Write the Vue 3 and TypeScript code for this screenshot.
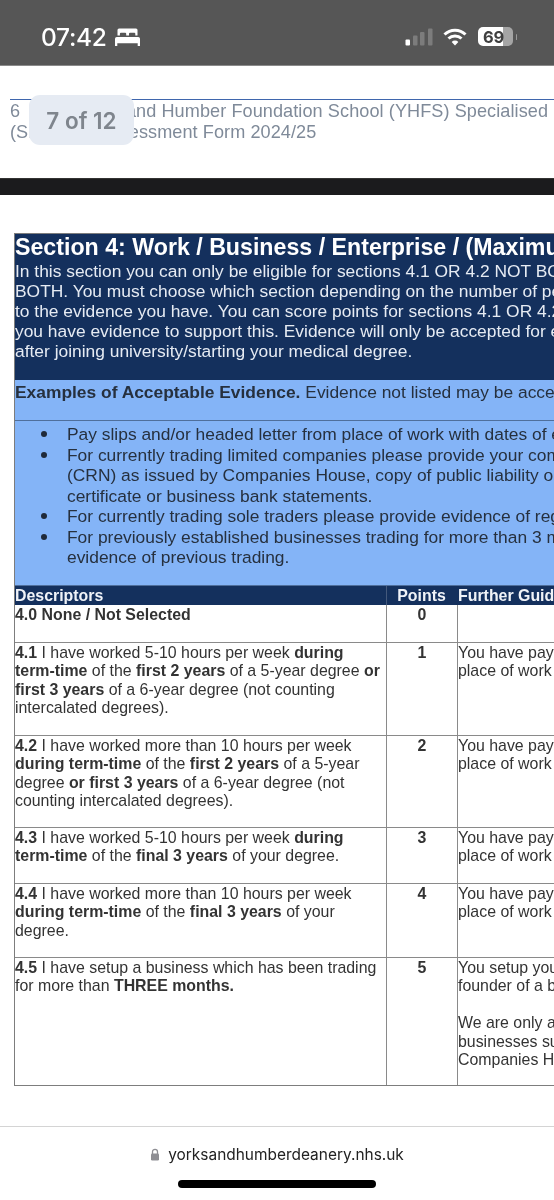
<script setup lang="ts">
interface Seg { t: string; b?: boolean }
interface Row { h: number; pts: string; lines: Seg[][]; guide: string[] }

const pay = ['You have pay slips', 'place of work']
const rows: Row[] = [
  { h: 38, pts: '0', lines: [[{ t: '4.0 None / Not Selected', b: true }]], guide: [] },
  { h: 93, pts: '1', guide: pay, lines: [
    [{ t: '4.1', b: true }, { t: ' I have worked 5-10 hours per week ' }, { t: 'during', b: true }],
    [{ t: 'term-time', b: true }, { t: ' of the ' }, { t: 'first 2 years', b: true }, { t: ' of a 5-year degree ' }, { t: 'or', b: true }],
    [{ t: 'first 3 years', b: true }, { t: ' of a 6-year degree (not counting' }],
    [{ t: 'intercalated degrees).' }]
  ] },
  { h: 92, pts: '2', guide: pay, lines: [
    [{ t: '4.2', b: true }, { t: ' I have worked more than 10 hours per week' }],
    [{ t: 'during term-time', b: true }, { t: ' of the ' }, { t: 'first 2 years', b: true }, { t: ' of a 5-year' }],
    [{ t: 'degree ' }, { t: 'or first 3 years', b: true }, { t: ' of a 6-year degree (not' }],
    [{ t: 'counting intercalated degrees).' }]
  ] },
  { h: 56, pts: '3', guide: pay, lines: [
    [{ t: '4.3', b: true }, { t: ' I have worked 5-10 hours per week ' }, { t: 'during', b: true }],
    [{ t: 'term-time', b: true }, { t: ' of the ' }, { t: 'final 3 years', b: true }, { t: ' of your degree.' }]
  ] },
  { h: 74, pts: '4', guide: pay, lines: [
    [{ t: '4.4', b: true }, { t: ' I have worked more than 10 hours per week' }],
    [{ t: 'during term-time', b: true }, { t: ' of the ' }, { t: 'final 3 years', b: true }, { t: ' of your' }],
    [{ t: 'degree.' }]
  ] },
  { h: 127, pts: '5', guide: ['You setup your', 'founder of a business', '\u00a0', 'We are only able', 'businesses such', 'Companies House'], lines: [
    [{ t: '4.5', b: true }, { t: ' I have setup a business which has been trading' }],
    [{ t: 'for more than ' }, { t: 'THREE months.', b: true }]
  ] }
]
const intro = [
  'In this section you can only be eligible for sections 4.1 OR 4.2 NOT BOTH',
  'BOTH. You must choose which section depending on the number of periods',
  'to the evidence you have. You can score points for sections 4.1 OR 4.2 if',
  'you have evidence to support this. Evidence will only be accepted for evidence',
  'after joining university/starting your medical degree.'
]
const bullets = [
  ['Pay slips and/or headed letter from place of work with dates of employment'],
  ['For currently trading limited companies please provide your company number', '(CRN) as issued by Companies House, copy of public liability or', 'certificate or business bank statements.'],
  ['For currently trading sole traders please provide evidence of registration'],
  ['For previously established businesses trading for more than 3 months provide', 'evidence of previous trading.']
]
</script>

<template>
  <div class="phone">
    <header class="status">
      <div class="time">07:42</div>
      <svg class="bed" width="25" height="18" viewBox="0 0 25 18">
        <path d="M4 0.500h17a1.500 1.500 0 0 1 1.500 1.500v5.500h-2.200V5.800a1 1 0 0 0-1-1h-4.300a1 1 0 0 0-1 1v1.700h-2.800V5.800a1 1 0 0 0-1-1H5.900a1 1 0 0 0-1 1v1.700H2.500V2A1.500 1.500 0 0 1 4 0.500z" fill="#fff"/>
        <path d="M1.800 9h21.400A1.800 1.800 0 0 1 25 10.800V18h-2.300v-2.800H2.300V18H0v-7.200A1.800 1.800 0 0 1 1.800 9z" fill="#fff"/>
      </svg>
      <div class="status-right">
        <svg width="28" height="18" viewBox="0 0 28 18">
          <rect x="0.500" y="11.500" width="4.500" height="6" rx="1" fill="#fff"/>
          <rect x="8" y="7.500" width="4.500" height="10" rx="1" fill="#7c7c7c"/>
          <rect x="15" y="4" width="4.500" height="13.500" rx="1" fill="#7c7c7c"/>
          <rect x="23" y="0.500" width="4.500" height="17" rx="1" fill="#7c7c7c"/>
        </svg>
        <svg class="wifi" width="24" height="18" viewBox="0 0 24 18" fill="none" stroke="#fff" stroke-width="3">
          <path d="M1.500 6.500a15 15 0 0 1 21 0"/>
          <path d="M5.500 10.500a9.500 9.500 0 0 1 13 0"/>
          <path d="M12 17.500l-3.300-3.500a4.600 4.600 0 0 1 6.600 0z" fill="#fff" stroke="none"/>
        </svg>
        <div class="battery"><span>69</span></div>
        <div class="nub"></div>
      </div>
    </header>

    <section class="doc-head">
      <div class="doc-rule"></div>
      <div class="doc-title">
        <div>6 &nbsp; &nbsp; Yorkshire and Humber Foundation School (YHFS) Specialised Foundation</div>
        <div>(SFP) Self Assessment Form 2024/25</div>
      </div>
      <div class="pill">7 of 12</div>
    </section>
    <div class="page-gap"></div>

    <main class="sheet">
      <div class="table">
        <div class="dark-block">
          <h1>Section 4: Work / Business / Enterprise / (Maximum 5 points)</h1>
          <div v-for="l in intro" :key="l">{{ l }}</div>
        </div>
        <div class="examples"><b>Examples of Acceptable Evidence.</b> Evidence not listed may be accepted at discretion</div>
        <ul class="evidence">
          <li v-for="(b, i) in bullets" :key="i"><div v-for="l in b" :key="l">{{ l }}</div></li>
        </ul>
        <div class="row head">
          <div class="c1">Descriptors</div>
          <div class="c2">Points</div>
          <div class="c3">Further Guidance</div>
        </div>
        <div v-for="r in rows" :key="r.pts" class="row body" :style="{ height: r.h + 'px' }">
          <div class="c1">
            <div v-for="(l, i) in r.lines" :key="i"><template v-for="(s, j) in l" :key="j"><b v-if="s.b">{{ s.t }}</b><template v-else>{{ s.t }}</template></template></div>
          </div>
          <div class="c2"><b>{{ r.pts }}</b></div>
          <div class="c3"><div v-for="(g, k) in r.guide" :key="k">{{ g }}</div></div>
        </div>
      </div>
    </main>

    <footer class="url-bar">
      <div class="url">
        <svg width="10" height="13" viewBox="0 0 10 13">
          <path d="M2.500 6V3.800a2.500 2.500 0 0 1 5 0V6" fill="none" stroke="#8e8e93" stroke-width="1.300"/>
          <rect x="1" y="5.500" width="8" height="7" rx="1.200" fill="#8e8e93"/>
        </svg>
        <span>yorksandhumberdeanery.nhs.uk</span>
      </div>
      <div class="home"></div>
    </footer>
  </div>
</template>

<style>
html, body { margin: 0; background: #fff; }
</style>

<style scoped>
.phone {
  width: 554px;
  height: 1200px;
  overflow: hidden;
  display: flex;
  flex-direction: column;
  background: #fff;
  font-family: "Liberation Sans", Arial, sans-serif;
  position: relative;
  filter: blur(0.3px);
}
.status {
  height: 66px;
  flex: none;
  background: #565656;
  border-bottom: 1px solid #8a8a8a;
  box-sizing: border-box;
  display: flex;
  align-items: center;
  padding: 8px 0 0 41px;
  color: #fff;
}
.time { font: 500 24.500px "Inter", "Liberation Sans", sans-serif; letter-spacing: -0.300px; }
.bed { margin-left: 8px; margin-top: 1px; flex: none; }
.status-right {
  margin-left: auto;
  display: flex;
  align-items: center;
  padding-right: 37px;
}
.wifi { margin-left: 10px; }
.battery {
  margin-left: 11px;
  width: 35px;
  height: 19px;
  padding-right: 3px;
  box-sizing: border-box;
  border-radius: 5px;
  background: linear-gradient(90deg, #fff 0 71%, #a5a5a5 71% 100%);
  color: #3f3f3f;
  font: 700 16.500px "Inter", "Liberation Sans", sans-serif;
  letter-spacing: -0.300px;
  display: flex;
  align-items: center;
  justify-content: center;
}
.nub { width: 1.500px; height: 6px; margin-left: 3px; background: #999; border-radius: 1px; }
.doc-head {
  height: 112px;
  flex: none;
  position: relative;
  box-sizing: border-box;
  padding: 33px 0 0 10px;
  overflow: hidden;
}
.doc-rule { height: 1px; background: #3f66ad; width: 544px; margin-bottom: 1px; }
.doc-title {
  font-size: 18.100px;
  line-height: 21px;
  color: #7f8a99;
  white-space: nowrap;
  letter-spacing: 0.080px;
}
.pill {
  position: absolute;
  left: 29px;
  top: 29px;
  width: 105px;
  height: 50px;
  border-radius: 11px;
  background: #e6ebf3;
  color: #7f858d;
  font: 600 22.500px "Inter", "Liberation Sans", sans-serif;
  display: flex;
  align-items: center;
  justify-content: center;
}
.page-gap { height: 17px; flex: none; background: #1b1b1d; border-top: 1px solid #333; box-sizing: border-box; }
.sheet {
  flex: 1;
  padding: 38px 0 0 14px;
  overflow: hidden;
  background: #fff;
}
.table {
  width: 900px;
  border: 1px solid #7d7d7d;
  border-right: 0;
  box-sizing: border-box;
  font-size: 17.400px;
  line-height: 20px;
  color: #26303e;
  white-space: nowrap;
}
.dark-block {
  height: 146px;
  background: #14305d;
  color: #e6ebf3;
}
h1 { margin: 0; font-size: 23.200px; line-height: 27px; font-weight: 700; color: #fff; }
.examples {
  height: 41px;
  box-sizing: border-box;
  background: #84b4f7;
  border-bottom: 1px solid #4f6f9c;
  padding-top: 2px;
}
.evidence {
  height: 165px;
  box-sizing: border-box;
  margin: 0;
  padding: 3px 0 0 52px;
  background: #84b4f7;
  list-style: none;
  line-height: 20.500px;
  border-bottom: 1px solid #4f6f9c;
}
.evidence li { position: relative; }
.evidence li::before {
  content: "";
  position: absolute;
  left: -26px;
  top: 7px;
  width: 6px;
  height: 6px;
  border-radius: 50%;
  background: #1f2a3a;
}
.row { display: grid; grid-template-columns: 371px 72px 1fr; box-sizing: border-box; font-size: 15.900px; }
.row.head { height: 19px; background: #14305d; color: #f0f3f8; font-weight: 700; line-height: 19px; }
.row.head .c2 { text-align: center; padding-right: 2px; border-left: 1px solid #44597c; }
.row.body { border-bottom: 1.500px solid #8a8a8a; color: #333; line-height: 18.400px; padding-top: 1px; }
.row.body:last-child { border-bottom: 0; }
.body .c2 { border-left: 1px solid #8a8a8a; border-right: 1px solid #8a8a8a; text-align: center; margin-top: -1px; padding-top: 1px; }
.url-bar {
  height: 74px;
  flex: none;
  border-top: 1px solid #d4d4d4;
  box-sizing: border-box;
  background: #fff;
  display: flex;
  flex-direction: column;
  align-items: center;
  padding-top: 17px;
}
.url {
  display: flex;
  align-items: center;
  gap: 8px;
  font: 400 15.450px "Inter", "Liberation Sans", sans-serif;
  color: #222;
  height: 20px;
}
.home { width: 198px; height: 8px; border-radius: 4px; background: #000; margin-top: 16px; }
</style>
